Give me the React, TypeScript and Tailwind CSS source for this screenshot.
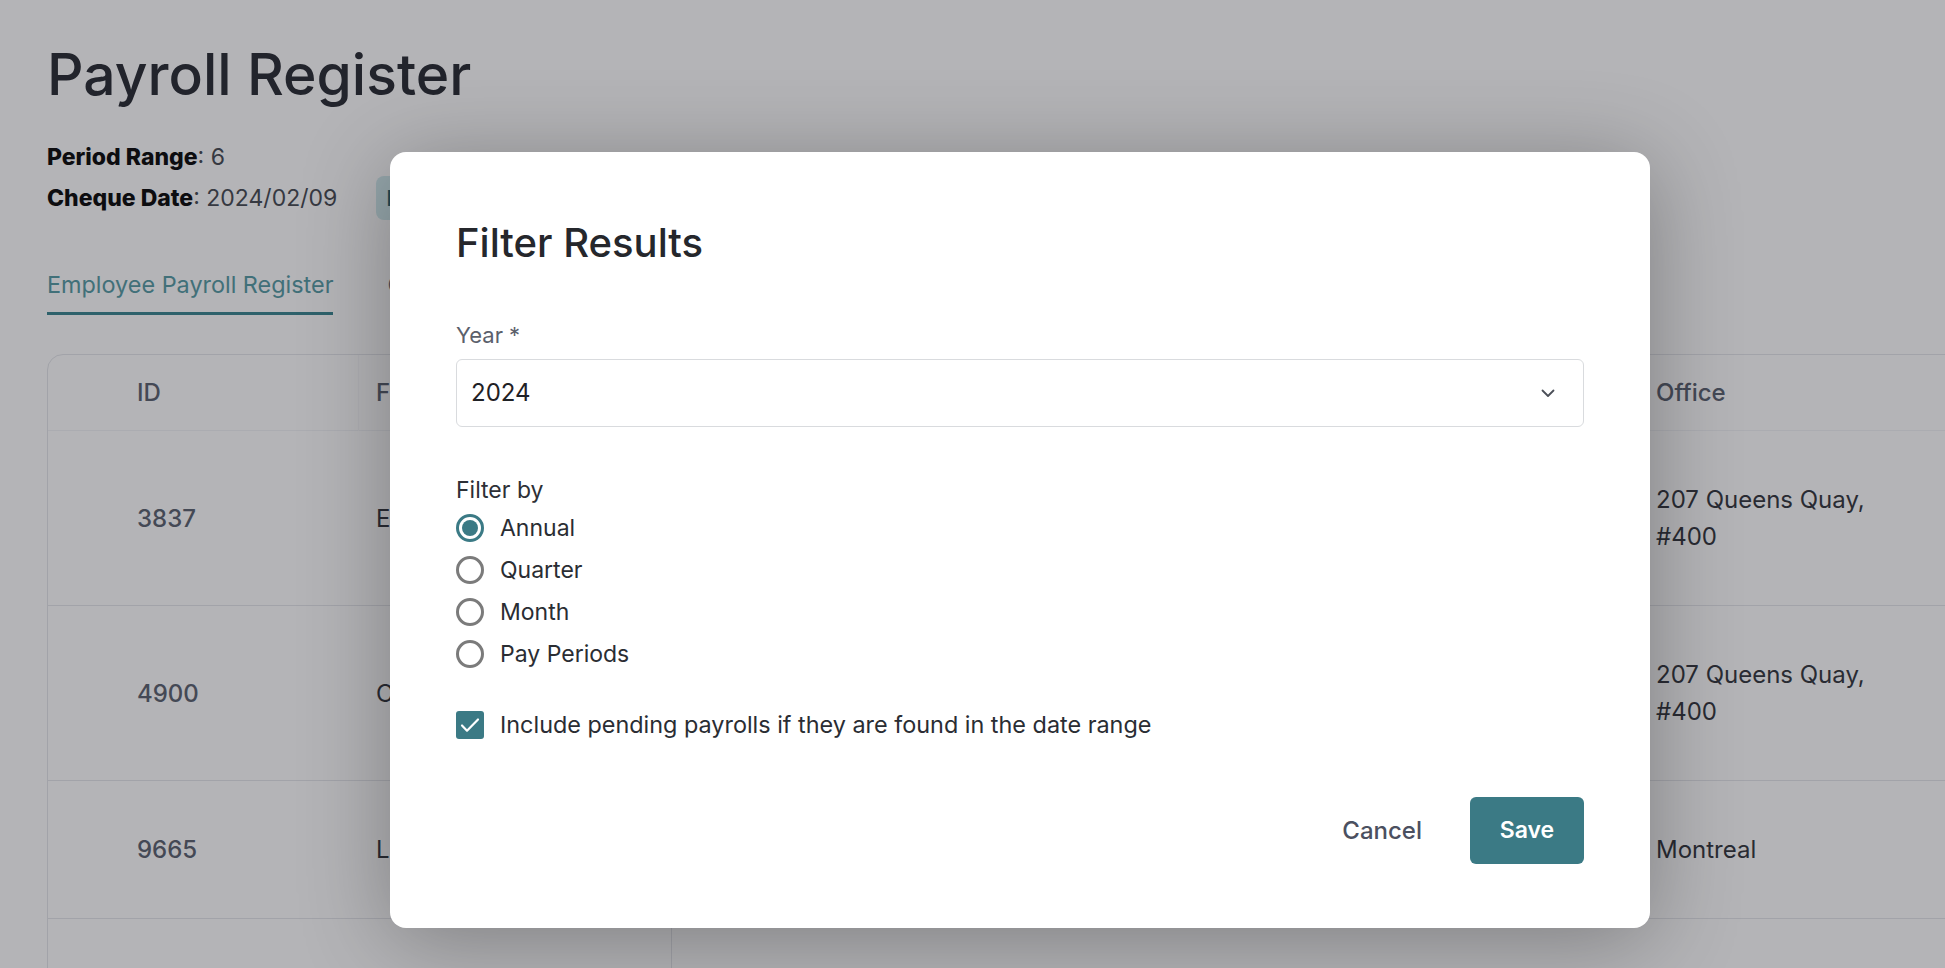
import { useState } from "react";

type Row = {
  id: string;
  first: string;
  office: string[];
};

const rows: Row[] = [
  { id: "3837", first: "Emily", office: ["207 Queens Quay,", "#400"] },
  { id: "4900", first: "Chris", office: ["207 Queens Quay,", "#400"] },
  { id: "9665", first: "Louis", office: ["Montreal"] },
];

const periods = ["Annual", "Quarter", "Month", "Pay Periods"];

const cols = "grid grid-cols-[311px_313px_969px_407px]";

function PayrollTable() {
  return (
    <div className="mt-[39px] w-[2000px] overflow-hidden rounded-2xl border border-gray-200 bg-white">
      <div className={`${cols} h-[76px] items-center border-b border-gray-100 text-[24px] font-medium text-[#5f6673]`}>
        <div className="h-full border-r border-[#f8f8f9] pl-[89px] leading-[76px]">ID</div>
        <div className="pl-[17px]">First Name</div>
        <div />
        <div className="pl-[15px]">Office</div>
      </div>
      {rows.map((r) => (
        <div key={r.id} className={`${cols} border-b border-gray-200 py-[50px] text-[24px] leading-[37px] text-[#393c43]`}>
          <div className="flex items-center pl-[89px] font-medium text-[#5f6673]">{r.id}</div>
          <div className="flex items-center pl-[17px]">{r.first}</div>
          <div />
          <div className="flex flex-col justify-center pl-[15px]">
            {r.office.map((line) => (
              <span key={line}>{line}</span>
            ))}
          </div>
        </div>
      ))}
      {/* totals row, starts below the fold */}
      <div className={`${cols} h-[137px]`}>
        <div />
        <div className="border-r border-gray-200" />
        <div />
        <div />
      </div>
    </div>
  );
}

function Radio({ checked }: { checked: boolean }) {
  return (
    <span
      className={`flex h-[28px] w-[28px] shrink-0 items-center justify-center rounded-full border-[3px] ${
        checked ? "border-[#3b7a85]" : "border-[#7b7b7b]"
      }`}
    >
      {checked && <span className="h-[16px] w-[16px] rounded-full bg-[#3b7a85]" />}
    </span>
  );
}

function FilterDialog() {
  const [period, setPeriod] = useState("Annual");
  const [pending, setPending] = useState(true);

  return (
    <div
      role="dialog"
      className="absolute left-[390px] top-[152px] w-[1260px] rounded-2xl bg-white px-[66px] pb-[64px] pt-[67px] shadow-[0_12px_90px_rgba(0,0,0,0.3)]"
    >
      <h2 className="text-[40px] font-medium leading-[48px] text-[#25272c]">Filter Results</h2>

      <label className="mt-[53px] block text-[22px] leading-[30px] text-[#5b606b]">Year *</label>
      <div className="mt-[9px] flex h-[68px] items-center justify-between rounded-md border border-[#d9dbde] pl-[14px] pr-[28px] text-[24px] text-[#1f2125]">
        <span>2024</span>
        <svg width="14" height="9" viewBox="0 0 14 9" fill="none">
          <path d="M1.5 1.5l5.5 5.5 5.5-5.5" stroke="#4b4f58" strokeWidth="1.8" strokeLinecap="round" strokeLinejoin="round" />
        </svg>
      </div>

      <p className="mt-[48px] text-[23px] leading-[30px] text-[#2d3036]">Filter by</p>
      <div className="mt-[2px] flex flex-col">
        {periods.map((p) => (
          <label
            key={p}
            onClick={() => setPeriod(p)}
            className="flex h-[42px] cursor-pointer items-center gap-[16px] text-[23px] text-[#2a2d33]"
          >
            <Radio checked={period === p} />
            {p}
          </label>
        ))}
      </div>

      <label
        onClick={() => setPending(!pending)}
        className="mt-[29px] flex h-[42px] cursor-pointer items-center gap-[16px] text-[23.4px] text-[#2a2d33]"
      >
        <span
          className={`flex h-[28px] w-[28px] shrink-0 items-center justify-center rounded-[3px] ${
            pending ? "bg-[#3b7a85]" : "border-[3px] border-[#7b7b7b]"
          }`}
        >
          {pending && (
            <svg width="28" height="28" viewBox="0 0 28 28" fill="none">
              <path d="M6 14.5l5 5.2L22 8.5" stroke="white" strokeWidth="2.2" strokeLinecap="round" strokeLinejoin="round" />
            </svg>
          )}
        </span>
        Include pending payrolls if they are found in the date range
      </label>

      <div className="mt-[51px] flex items-center justify-end gap-[48px]">
        <button className="text-[24px] font-medium text-[#4b5060]">Cancel</button>
        <button className="h-[67px] w-[114px] rounded-md bg-[#3b7a85] text-[23px] font-semibold text-white">Save</button>
      </div>
    </div>
  );
}

export default function App() {
  return (
    <div className="relative h-[968px] w-full overflow-hidden bg-white font-['Inter',sans-serif]">
      {/* Page behind the dialog */}
      <div className="pl-[47px] pt-[41px]">
        <h1 className="text-[57px] font-medium leading-[68px] text-[#2f3239]">Payroll Register</h1>

        <div className="mt-[33px] text-[23px] leading-[30px] text-[#4b4f57]">
          <span className="font-extrabold text-[#111]">Period Range</span>: 6
        </div>
        <div className="mt-[4px] flex h-[44px] items-center gap-[39px] text-[23px] text-[#4b4f57]">
          <div>
            <span className="font-extrabold text-[#111]">Cheque Date</span>: 2024/02/09
          </div>
          <span className="flex h-[44px] items-center rounded-lg bg-[#d4ecef] px-[10px] text-[22px] font-medium text-[#2f6670]">
            In Progress
          </span>
        </div>

        <div className="mt-[49px] flex gap-[54px] text-[23.4px] leading-[32px]">
          <div className="border-b-[3px] border-[#3f8893] pb-[11px] text-[#5b9ea7]">Employee Payroll Register</div>
          <div className="pb-[11px] text-[#6b7280]">Company Summary</div>
        </div>

        <PayrollTable />
      </div>

      {/* Backdrop */}
      <div className="absolute inset-0 bg-[#06080f]/30" />

      <FilterDialog />
    </div>
  );
}
